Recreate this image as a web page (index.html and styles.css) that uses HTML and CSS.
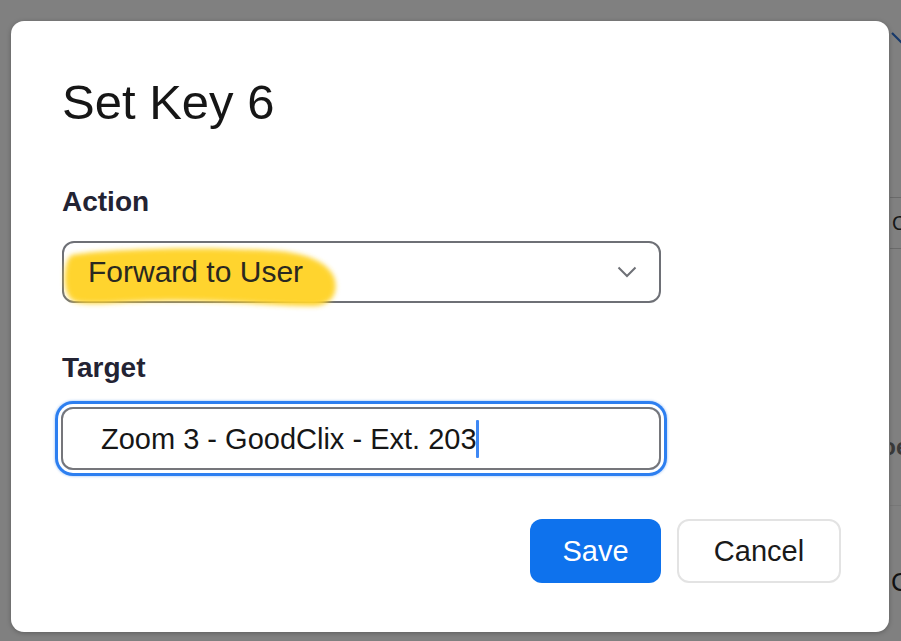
FILE: index.html
```html
<!DOCTYPE html>
<html lang="en">
<head>
<meta charset="utf-8">
<title>Set Key 6</title>
<link rel="stylesheet" href="styles.css">
</head>
<body>
<div class="page">
  <div class="page-main"></div>
  <div class="page-side">
    <svg class="side-chevron" viewBox="0 0 22 12" width="22" height="12"><path d="M1 1 L11 11 L21 1" fill="none" stroke="#17396b" stroke-width="2.2"/></svg>
    <div class="side-rule first"></div>
    <div class="side-row">Co</div>
    <div class="side-rule"></div>
    <div class="side-oe">Does</div>
    <div class="side-rule light"></div>
    <div class="side-c">C</div>
  </div>
</div>

<div class="modal" role="dialog" aria-labelledby="dlg-title">
  <h1 class="modal-title" id="dlg-title">Set Key 6</h1>

  <div class="field-label first">Action</div>
  <div class="select">
    <svg class="marker" width="300" height="72" viewBox="0 0 300 72" aria-hidden="true">
      <defs><filter id="soft" x="-10%" y="-20%" width="120%" height="140%"><feGaussianBlur stdDeviation="2.4"/></filter></defs>
      <path filter="url(#soft)" fill="#ffd42e" d="M8 12 C 40 6, 140 3, 215 8 C 245 11, 264 20, 270 34 C 275 50, 268 63, 248 63 C 200 62, 150 57, 95 58 C 60 58, 30 63, 12 59 C 2 56, 0 42, 1 30 C 2 20, 4 14, 8 12 Z"/>
    </svg>
    <span class="select-value">Forward to User</span>
    <svg class="select-chevron" viewBox="0 0 20 12" width="20" height="12" aria-hidden="true"><path d="M1.5 1.5 L10 10 L18.5 1.5" fill="none" stroke="#6e7076" stroke-width="2"/></svg>
  </div>

  <div class="field-label second">Target</div>
  <div class="input">
    <span class="input-value">Zoom 3 - GoodClix - Ext. 203</span><span class="caret"></span>
  </div>

  <div class="actions">
    <button class="btn btn-primary" type="button">Save</button>
    <button class="btn btn-secondary" type="button">Cancel</button>
  </div>
</div>
</body>
</html>
```

FILE: styles.css
```css
html, body {
  margin: 0;
  padding: 0;
}

body {
  width: 901px;
  height: 641px;
  overflow: hidden;
  background: #808080;
  font-family: "Liberation Sans", Arial, Helvetica, sans-serif;
  position: relative;
}

/* dimmed page behind the dialog */
.page {
  display: flex;
  height: 641px;
}

.page-main {
  width: 890px;
  flex: none;
}

.page-side {
  flex: 1;
  display: flex;
  flex-direction: column;
  overflow: hidden;
}

.side-chevron {
  display: block;
  margin-top: 32px;
  margin-left: 1px;
  flex: none;
}

.side-rule {
  height: 1px;
  background: #6a6a6a;
  flex: none;
}

.side-rule.first {
  margin-top: 153px;
}

.side-rule.light {
  margin-top: 44px;
  background: #777777;
}

.side-row {
  height: 50px;
  display: flex;
  align-items: center;
  padding-left: 2px;
  font-size: 20px;
  color: #161616;
  white-space: nowrap;
}

.side-oe {
  margin-top: 184px;
  margin-left: -26px;
  font-size: 24px;
  line-height: 28px;
  font-weight: bold;
  color: #3a3a3a;
  white-space: nowrap;
}

.side-c {
  margin-top: 61px;
  margin-left: 1px;
  font-size: 26px;
  line-height: 30px;
  color: #121212;
  white-space: nowrap;
}

/* dialog */
.modal {
  position: absolute;
  left: 11px;
  top: 21px;
  width: 878px;
  height: 611px;
  box-sizing: border-box;
  padding: 51px 48px 49px 51px;
  background: #ffffff;
  border-radius: 13px;
  box-shadow: 0 1px 5px rgba(0, 0, 0, 0.28);
  display: flex;
  flex-direction: column;
}

.modal-title {
  margin: 0;
  font-size: 49px;
  line-height: 60px;
  font-weight: normal;
  color: #161616;
}

.field-label {
  font-size: 28px;
  line-height: 34px;
  font-weight: bold;
  color: #232333;
}

.field-label.first {
  margin-top: 53px;
}

.field-label.second {
  margin-top: 48px;
}

.select {
  position: relative;
  margin-top: 22px;
  width: 599px;
  height: 62px;
  box-sizing: border-box;
  border: 2px solid #6e7076;
  border-radius: 12px;
  padding: 0 22px 0 24px;
  display: flex;
  align-items: center;
  justify-content: space-between;
}

.marker {
  position: absolute;
  left: 0;
  top: 0;
  overflow: visible;
  z-index: 0;
}

.select-value {
  position: relative;
  z-index: 1;
  font-size: 30px;
  line-height: 34px;
  color: #2a2820;
}

.select-chevron {
  display: block;
  position: relative;
  z-index: 1;
}

.input {
  margin-top: 22px;
  width: 600px;
  margin-left: -1px;
  height: 63px;
  box-sizing: border-box;
  border: 2px solid #75767b;
  border-radius: 12px;
  padding-left: 38px;
  display: flex;
  align-items: center;
  box-shadow: 0 0 0 3px #ffffff, 0 0 0 6px #2d7ff0, 0 0 2px 7px rgba(45, 127, 240, 0.25);
}

.input-value {
  font-size: 29px;
  line-height: 34px;
  color: #161616;
  white-space: nowrap;
}

.caret {
  display: block;
  width: 3px;
  height: 38px;
  margin-left: -1px;
  background: #3e88f4;
  border-radius: 1px;
}

.actions {
  margin-top: auto;
  display: flex;
  justify-content: flex-end;
  gap: 16px;
}

.btn {
  height: 64px;
  box-sizing: border-box;
  border-radius: 12px;
  font-family: inherit;
  font-size: 29px;
  padding: 0;
  cursor: pointer;
}

.btn-primary {
  width: 131px;
  background: #0e72ed;
  border: none;
  color: #ffffff;
}

.btn-secondary {
  width: 164px;
  background: #ffffff;
  border: 2px solid #e3e3e3;
  color: #1a1a1a;
}
```
